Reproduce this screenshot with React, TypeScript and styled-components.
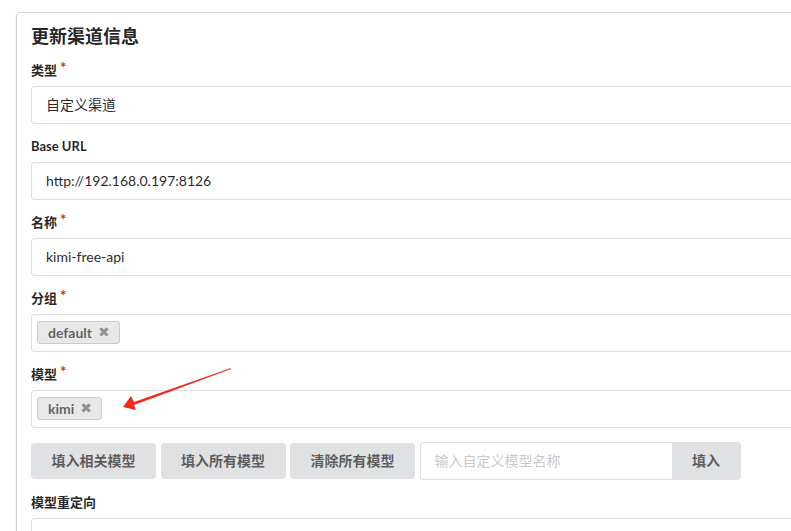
import React from "react";
import styled, { createGlobalStyle } from "styled-components";

const Global = createGlobalStyle`
  html, body { margin: 0; padding: 0; background: #fff; overflow: hidden; }
  body { font-family: Lato, "Noto Sans CJK SC", "Helvetica Neue", Arial, sans-serif; font-size: 14px; color: rgba(0,0,0,0.87); }
  * { box-sizing: border-box; }
`;

const Page = styled.div`
  position: relative;
  width: 791px;
  height: 531px;
  overflow: hidden;
  padding: 12px 0 0 16px;
`;

const Card = styled.div`
  width: 1000px;
  border: 1px solid #d4d4d5;
  border-radius: 4px;
  box-shadow: 0 1px 3px 0 #e4e4e5;
  padding: 14px 14px 0 14px;
  background: #fff;
`;

const Title = styled.div`
  font-size: 18px;
  font-weight: 700;
  line-height: 23px;
  margin-top: -2px;
  margin-bottom: 14px;
  color: rgba(0,0,0,0.87);
`;

const Field = styled.div`
  margin-bottom: 14px;
`;

const Label = styled.div`
  font-size: 13px;
  font-weight: 700;
  line-height: 17px;
  height: 20px;
  margin-bottom: 4px;
  color: rgba(0,0,0,0.87);
  display: flex;
  align-items: flex-start;
`;

const Required = styled.span`
  color: #db2828;
  font-size: 15px;
  line-height: 15px;
  margin: -2px 0 0 3px;
`;

const Box = styled.div`
  height: 38px;
  border: 1px solid rgba(34,36,38,0.15);
  border-radius: 4px;
  padding: 0 14px 2px 14px;
  display: flex;
  align-items: center;
  font-size: 14px;
  color: rgba(0,0,0,0.87);
  background: #fff;
`;

const MultiBox = styled(Box)`
  padding: 0 5px 1px 5px;
`;

const Tag = styled.span`
  display: inline-flex;
  align-items: center;
  height: 23px;
  padding: 0 10px 1px 11px;
  background: #e8e8e8;
  box-shadow: inset 0 0 0 1px rgba(34,36,38,0.15);
  border-radius: 4px;
  font-weight: 700;
  font-size: 14px;
  color: rgba(0,0,0,0.6);
`;

const TagX = styled.span`
  margin-left: 6px;
  font-size: 14px;
  line-height: 14px;
  color: rgba(0,0,0,0.4);
  font-family: "DejaVu Sans", sans-serif;
`;

const ButtonRow = styled.div`
  display: flex;
  align-items: center;
  gap: 4.5px;
  height: 38px;
  margin-bottom: 14px;
`;

const Button = styled.button<{ $attached?: boolean }>`
  width: ${(p) => (p.$attached ? "69px" : "125px")};
  height: ${(p) => (p.$attached ? "38px" : "36px")};
  padding: 0 0 2px 0;
  border: none;
  background: #e0e1e2;
  color: rgba(0,0,0,0.6);
  font-family: Lato, "Noto Sans CJK SC", sans-serif;
  font-size: 14px;
  font-weight: 700;
  border-radius: ${(p) => (p.$attached ? "0 4px 4px 0" : "4px")};
  white-space: nowrap;
`;

const ActionInput = styled.div`
  display: flex;
`;

const TextInput = styled.input`
  width: 252px;
  height: 38px;
  border: 1px solid rgba(34,36,38,0.15);
  border-right: none;
  border-radius: 4px 0 0 4px;
  padding: 0 14px 2px 14px;
  font-family: Lato, "Noto Sans CJK SC", sans-serif;
  font-size: 14px;
  outline: none;
  &::placeholder { color: rgba(191,191,191,0.87); }
`;

const Arrow = styled.svg`
  position: absolute;
  left: 0;
  top: 0;
  pointer-events: none;
`;

export default function App() {
  return (
    <Page>
      <Global />
      <Card>
        <Title>更新渠道信息</Title>
        <Field>
          <Label>类型<Required>*</Required></Label>
          <Box>自定义渠道</Box>
        </Field>
        <Field>
          <Label>Base URL</Label>
          <Box>http://192.168.0.197:8126</Box>
        </Field>
        <Field>
          <Label>名称<Required>*</Required></Label>
          <Box>kimi-free-api</Box>
        </Field>
        <Field>
          <Label>分组<Required>*</Required></Label>
          <MultiBox>
            <Tag>default<TagX>✖</TagX></Tag>
          </MultiBox>
        </Field>
        <Field>
          <Label>模型<Required>*</Required></Label>
          <MultiBox>
            <Tag>kimi<TagX>✖</TagX></Tag>
          </MultiBox>
        </Field>
        <ButtonRow>
          <Button>填入相关模型</Button>
          <Button>填入所有模型</Button>
          <Button>清除所有模型</Button>
          <ActionInput>
            <TextInput placeholder="输入自定义模型名称" />
            <Button $attached>填入</Button>
          </ActionInput>
        </ButtonRow>
        <Field>
          <Label>模型重定向</Label>
          <Box />
        </Field>
      </Card>
      <Arrow width="791" height="531" viewBox="0 0 791 531">
        <polygon
          points="231,368 134,402 131,396 123,407 136,410 134,405 231,369"
          fill="#f02a1e"
        />
      </Arrow>
    </Page>
  );
}
